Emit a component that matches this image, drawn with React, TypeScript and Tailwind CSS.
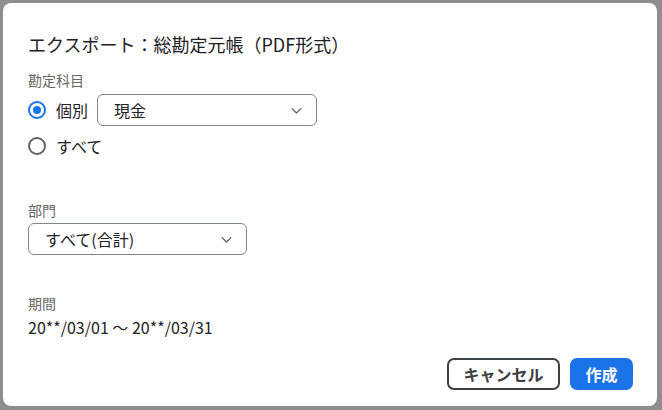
import React, { useState } from "react";

const font = {
  fontFamily: '"Noto Sans CJK JP", "Noto Sans", sans-serif',
};

const Chevron = () => (
  <svg width="15" height="15" viewBox="0 0 24 24" fill="none" stroke="#5f6368" strokeWidth="2.2" strokeLinecap="round" strokeLinejoin="round">
    <path d="M5 9l7 7 7-7" />
  </svg>
);

const Radio = ({ checked, onClick }: { checked: boolean; onClick: () => void }) => (
  <button
    onClick={onClick}
    className={`flex items-center justify-center w-[18px] h-[18px] rounded-full border-2 shrink-0 ${
      checked ? "border-[#1a73e8]" : "border-[#5f6368]"
    }`}
  >
    {checked && <span className="block w-[8px] h-[8px] rounded-full bg-[#1a73e8]" />}
  </button>
);

const Select = ({ value, width }: { value: string; width: string }) => (
  <div
    className={`flex items-center justify-between h-[32px] border border-[#80868b] rounded-[6px] pl-[16px] pr-[12px] ${width}`}
  >
    <span className="text-[16px] text-[#202124]">{value}</span>
    <Chevron />
  </div>
);

const App: React.FC = () => {
  const [mode, setMode] = useState<"each" | "all">("each");

  return (
    <div className="w-[662px] h-[410px] bg-[#8e8e8e] pt-[3px] pl-[3px] overflow-hidden" style={font}>
      <div className="w-[654px] h-[403px] bg-white rounded-[8px] flex flex-col pl-[25px] pr-[24px]">
        {/* title */}
        <h1 className="text-[18px] leading-[24px] text-[#202124] mt-[29px]">
          エクスポート：総勘定元帳（PDF形式）
        </h1>

        {/* account */}
        <div className="text-[14px] leading-[20px] text-[#666] mt-[14px]">勘定科目</div>
        <div className="flex items-center mt-[4px]">
          <Radio checked={mode === "each"} onClick={() => setMode("each")} />
          <span className="text-[16px] text-[#202124] ml-[10px] mr-[9px]">個別</span>
          <Select value="現金" width="w-[220px]" />
        </div>
        <div className="flex items-center h-[24px] mt-[8px]">
          <Radio checked={mode === "all"} onClick={() => setMode("all")} />
          <span className="text-[16px] text-[#202124] ml-[10px]">すべて</span>
        </div>

        {/* department */}
        <div className="text-[14px] leading-[20px] text-[#666] mt-[42px]">部門</div>
        <div className="mt-[3px]">
          <Select value="すべて(合計)" width="w-[219px]" />
        </div>

        {/* period */}
        <div className="text-[14px] leading-[20px] text-[#666] mt-[38px]">期間</div>
        <div className="text-[16px] leading-[22px] text-[#202124] mt-[3px]">
          20**/03/01 ～ 20**/03/31
        </div>

        {/* actions */}
        <div className="flex justify-end gap-[10px] mt-[20px]">
          <button className="w-[113px] h-[32px] border-2 border-[#3c4043] rounded-[7px] text-[16px] font-bold text-[#3c4043]">
            キャンセル
          </button>
          <button className="w-[63px] h-[32px] bg-[#1a73e8] rounded-[7px] text-[16px] font-bold text-white">
            作成
          </button>
        </div>
      </div>
    </div>
  );
};

export default App;
